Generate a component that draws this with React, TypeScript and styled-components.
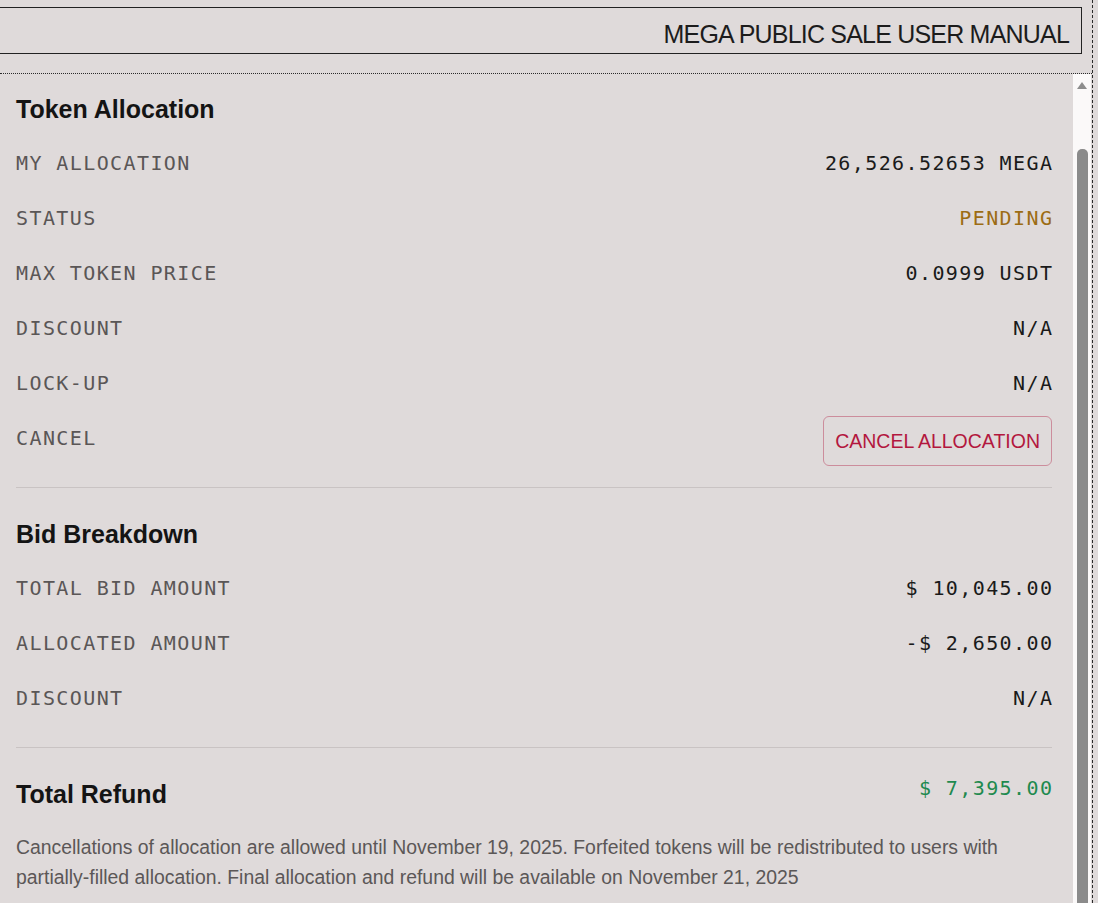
import React from 'react';
import styled, {createGlobalStyle} from 'styled-components';

const GlobalStyle = createGlobalStyle`
  html, body {
    margin: 0;
    padding: 0;
    height: 100%;
    overflow: hidden;
    background: #dfdada;
  }
  #root {
    height: 100%;
  }
`;

const MONO = `"DejaVu Sans Mono", "Liberation Mono", monospace`;
const SANS = `"Liberation Sans", Arial, sans-serif`;

const Frame = styled.div`
  width: 1092px;
  height: 100%;
  border-right: 1px dashed #2a2a2a;
  display: flex;
  flex-direction: column;
  background: #dfdada;
`;

const TopBar = styled.header`
  height: 74px;
  padding: 7px 10px 0 0;
  box-sizing: border-box;
  border-bottom: 1px dotted #2a2a2a;
  flex-shrink: 0;
`;

const ManualLink = styled.div`
  height: 47px;
  box-sizing: border-box;
  border: 1px solid #222;
  border-left: none;
  display: flex;
  align-items: flex-end;
  justify-content: flex-end;
  padding: 0 12px 4px 0;
  font-family: ${SANS};
  font-size: 25px;
  letter-spacing: -0.8px;
  color: #1c1c1c;
`;

const Body = styled.div`
  flex: 1;
  display: flex;
  min-height: 0;
`;

const Panel = styled.main`
  flex: 1;
  overflow: hidden;
  padding: 18px 21px 0 16px;
  box-sizing: border-box;
`;

const Scrollbar = styled.div`
  width: 18px;
  background: #fbf9f9;
  display: flex;
  flex-direction: column;
  align-items: flex-start;
  flex-shrink: 0;
  margin-right: 1px;
`;

const ArrowUp = styled.div`
  margin: 8px 0 0 4px;
  width: 0;
  height: 0;
  border-left: 5px solid transparent;
  border-right: 5px solid transparent;
  border-bottom: 7px solid #8d8d8d;
`;

const Thumb = styled.div`
  margin: 60px 0 0 4px;
  width: 11px;
  flex: 1;
  border-radius: 5px 5px 0 0;
  background: #8b8b8b;
`;

const Heading = styled.h2`
  margin: 0 0 10px;
  font-family: ${SANS};
  font-weight: 700;
  font-size: 25px;
  line-height: 34px;
  color: #141414;
`;

const Row = styled.div`
  display: flex;
  justify-content: space-between;
  align-items: flex-start;
`;

const Label = styled.span`
  font-family: ${MONO};
  font-size: 20px;
  line-height: 55px;
  letter-spacing: 1.4px;
  color: #5a5656;
`;

const Value = styled.span<{tone?: 'pending' | 'positive'}>`
  font-family: ${MONO};
  font-size: 20px;
  line-height: 55px;
  letter-spacing: 1.4px;
  margin-right: -1.4px;
  color: ${p => (p.tone === 'pending' ? '#9c6c14' : p.tone === 'positive' ? '#1f8a4f' : '#1a1a1a')};
`;

const CancelButton = styled.button`
  margin-top: 5px;
  height: 50px;
  padding: 0 11px;
  border: 1px solid #cc8d9c;
  border-radius: 6px;
  background: transparent;
  color: #b3173e;
  font-family: ${SANS};
  font-size: 19.5px;
  cursor: pointer;
`;

const Divider = styled.hr`
  margin: 21px 0 29px;
  border: none;
  border-top: 1px solid #c9c3c3;
`;

const TotalRow = styled.div`
  display: flex;
  justify-content: space-between;
  align-items: flex-start;
  margin-top: 1px;
`;

const TotalHeading = styled(Heading)`
  margin: 0;
`;

const TotalValue = styled(Value)`
  line-height: 22px;
`;

const Note = styled.p`
  margin: 21px 0 0;
  font-family: ${SANS};
  font-size: 19.4px;
  line-height: 30px;
  color: #5b5757;
`;

const allocation = [
  {label: 'MY ALLOCATION', value: '26,526.52653 MEGA'},
  {label: 'STATUS', value: 'PENDING', tone: 'pending' as const},
  {label: 'MAX TOKEN PRICE', value: '0.0999 USDT'},
  {label: 'DISCOUNT', value: 'N/A'},
  {label: 'LOCK-UP', value: 'N/A'},
];

const breakdown = [
  {label: 'TOTAL BID AMOUNT', value: '$ 10,045.00'},
  {label: 'ALLOCATED AMOUNT', value: '-$ 2,650.00'},
  {label: 'DISCOUNT', value: 'N/A'},
];

export default function App() {
  return (
    <>
      <GlobalStyle />
      <Frame>
        <TopBar>
          <ManualLink>MEGA PUBLIC SALE USER MANUAL</ManualLink>
        </TopBar>
        <Body>
          <Panel>
            <Heading>Token Allocation</Heading>
            {allocation.map(r => (
              <Row key={r.label}>
                <Label>{r.label}</Label>
                <Value tone={r.tone}>{r.value}</Value>
              </Row>
            ))}
            <Row>
              <Label>CANCEL</Label>
              <CancelButton>CANCEL ALLOCATION</CancelButton>
            </Row>
            <Divider />
            <Heading>Bid Breakdown</Heading>
            {breakdown.map(r => (
              <Row key={r.label}>
                <Label>{r.label}</Label>
                <Value>{r.value}</Value>
              </Row>
            ))}
            <Divider />
            <TotalRow>
              <TotalHeading>Total Refund</TotalHeading>
              <TotalValue tone="positive">$ 7,395.00</TotalValue>
            </TotalRow>
            <Note>
              Cancellations of allocation are allowed until November 19, 2025. Forfeited tokens will be
              redistributed to users with partially-filled allocation. Final allocation and refund will be
              available on November 21, 2025
            </Note>
          </Panel>
          <Scrollbar>
            <ArrowUp />
            <Thumb />
          </Scrollbar>
        </Body>
      </Frame>
    </>
  );
}
